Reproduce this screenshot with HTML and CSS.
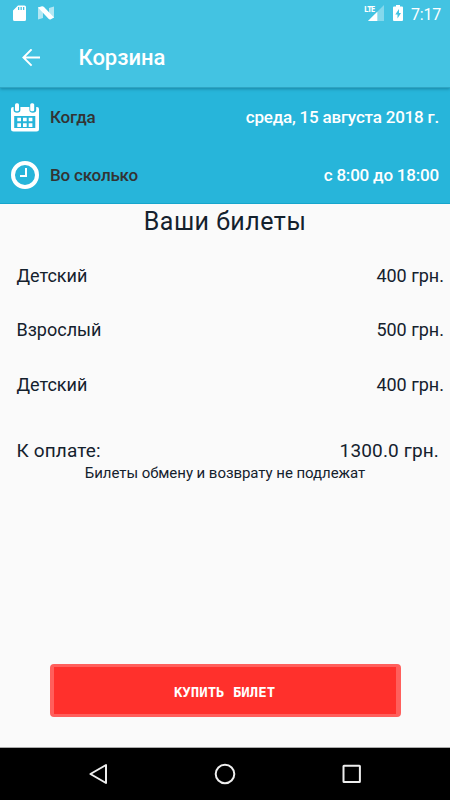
FILE: index.html
```html
<!DOCTYPE html>
<html lang="ru">
  <head>
    <meta charset="utf-8" />
    <title>Корзина</title>
    <link rel="stylesheet" href="styles.css">
  </head>

  <body>
    <header class="app-header">
      <div class="status-bar">
        <svg class="icon-sd" viewBox="0 0 14 17" width="14" height="17">
          <path fill="#fff" fill-rule="evenodd" d="M5 0.5H11.5Q13 .5 13 2V14.5Q13 16 11.5 16H1.5Q0 16 0 14.5V5.5ZM5 2V5H6.3V2ZM7.5 2V5H8.8V2ZM10 2V5H11.3V2Z" />
        </svg>
        <svg class="icon-n" viewBox="0 0 16 14" width="16" height="14">
          <path fill="#fff" opacity=".6" d="M0 1L5 3V12L0 13.5ZM11 2L16 .5V12L11 11Z" />
          <path fill="#fff" d="M0 1.5L4 .2Q5 0 6 1L16 11.5L12.5 13.4Q11.5 13.8 10.5 12.8Z" />
        </svg>
        <div class="status-right">
          <span class="lte">LTE</span>
          <svg class="icon-signal" viewBox="0 0 16 16" width="16" height="16">
            <path fill="#fff" opacity=".35" d="M16 0V16H0Z" />
            <path fill="#fff" d="M9.3 6.7V16H0Z" />
          </svg>
          <svg class="icon-battery" viewBox="0 0 10 16" width="10" height="16">
            <path fill="#fff" fill-rule="evenodd" d="M3 0H7V1.5H9Q10 1.5 10 2.5V15Q10 16 9 16H1Q0 16 0 15V2.5Q0 1.5 1 1.5H3ZM6 4L2.3 9.5H4.5V13.5L8 8H6Z" />
          </svg>
          <span class="clock">7:17</span>
        </div>
      </div>
      <div class="toolbar">
        <svg class="icon-back" viewBox="0 0 18 18" width="18" height="18" fill="none" stroke="#fff" stroke-width="1.9">
          <path d="M18 8.5H1.5M9.6 .3L1.4 8.5L9.6 16.7" />
        </svg>
        <h1 class="toolbar-title">Корзина</h1>
      </div>
    </header>

    <section class="visit">
      <div class="visit-row">
        <svg viewBox="0 0 28 29" width="28" height="29">
          <path fill="#fff" fill-rule="evenodd" d="M2 4H2.6V7Q2.6 9.7 6 9.7T9.4 7V4H18.4V7Q18.4 9.7 21.8 9.7T25.2 7V4H26Q28 4 28 6V26Q28 28.5 25.5 28.5H2.5Q0 28.5 0 26V6Q0 4 2 4ZM3.2 13V25H24.3V13Z" />
          <rect x="4" y=".3" width="4" height="8" rx="1.5" fill="#fff" />
          <rect x="19.2" y=".3" width="4" height="8" rx="1.5" fill="#fff" />
          <path fill="#fff" d="M6.3 14.7H10V18.3H6.3ZM12 14.7H15.7V18.3H12ZM17.7 14.7H21.4V18.3H17.7ZM6.3 20.3H10V23.9H6.3ZM12 20.3H15.7V23.9H12ZM17.7 20.3H21.4V23.9H17.7Z" />
        </svg>
        <span class="visit-label">Когда</span>
        <span class="visit-value">среда, 15 августа 2018 г.</span>
      </div>
      <div class="visit-row">
        <svg viewBox="0 0 28 28" width="28" height="28" fill="none" stroke="#fff">
          <circle cx="14" cy="14" r="12" stroke-width="4" />
          <path stroke-width="2" d="M15 7V15H9" />
        </svg>
        <span class="visit-label">Во сколько</span>
        <span class="visit-value">с 8:00 до 18:00</span>
      </div>
    </section>

    <main class="cart">
      <h2 class="cart-title">Ваши билеты</h2>
      <ul class="tickets">
        <li><span>Детский</span><span>400 грн.</span></li>
        <li><span>Взрослый</span><span>500 грн.</span></li>
        <li><span>Детский</span><span>400 грн.</span></li>
      </ul>
      <div class="total">
        <span>К оплате:</span>
        <span>1300.0 грн.</span>
      </div>
      <p class="note">Билеты обмену и возврату не подлежат</p>
      <button type="button" class="buy">КУПИТЬ БИЛЕТ</button>
    </main>

    <nav class="nav-bar">
      <svg viewBox="0 0 20 22" width="20" height="22" fill="none" stroke="#eee" stroke-width="2" stroke-linejoin="round">
        <path d="M18 2V20L2.4 11Z" />
      </svg>
      <svg viewBox="0 0 22 22" width="22" height="22" fill="none" stroke="#eee" stroke-width="2">
        <circle cx="11" cy="11" r="9.3" />
      </svg>
      <svg viewBox="0 0 20 20" width="20" height="20" fill="none" stroke="#eee" stroke-width="2">
        <rect x="1.5" y="1.7" width="16.4" height="16.4" rx=".5" />
      </svg>
    </nav>
  </body>
</html>
```

FILE: styles.css
```css
* {
  box-sizing: border-box;
}

body {
  display: flex;
  flex-direction: column;
  height: 800px;
  margin: 0;
  background-color: #fafafa;
  color: #14212d;
  font-family: Roboto, sans-serif;
}

.app-header {
  position: relative;
  height: 88px;
  background-color: #43c3e2;
  border-bottom: 1px solid #2fa5c3;
  box-shadow: 0 1px 3px rgba(0, 60, 80, 0.4);
  color: white;
}

.status-bar {
  display: flex;
  align-items: center;
  height: 28px;
  padding: 0 9px 0 13px;
}

.icon-sd {
  margin-top: -2px;
}

.icon-n {
  margin-left: 11px;
  margin-top: -2px;
}

.status-right {
  display: flex;
  align-items: center;
  margin-left: auto;
}

.lte {
  height: 18px;
  margin-right: -6px;
  font-family: "Open Sans", sans-serif;
  font-size: 8px;
  font-weight: bold;
  line-height: 8px;
  letter-spacing: -1.2px;
}

.icon-signal {
  margin-top: -2px;
}

.icon-battery {
  margin: -2px 8px 0 9px;
}

.clock {
  font-size: 16px;
  letter-spacing: -0.2px;
}

.toolbar {
  display: flex;
  align-items: center;
  height: 59px;
  padding-left: 22px;
}

.toolbar-title {
  margin: 0 0 0 38.5px;
  font-size: 22px;
  font-weight: 500;
}

.visit {
  height: 116px;
  background-color: #27b5da;
  border-bottom: 1px solid #16a5cc;
}

.visit-row {
  display: flex;
  align-items: center;
  height: 58px;
  padding: 0 11px;
  font-size: 17px;
  font-weight: 500;
  letter-spacing: -0.2px;
}

.visit-label {
  margin-left: 11px;
  color: #333;
}

.visit-value {
  margin-left: auto;
  color: white;
}

.cart {
  display: flex;
  flex: 1;
  flex-direction: column;
}

.cart-title {
  margin: 0;
  font-size: 25px;
  font-weight: normal;
  line-height: 36px;
  letter-spacing: 0.5px;
  text-align: center;
}

.tickets {
  margin: 8px 0 0;
  padding: 0;
  list-style: none;
}

.tickets li {
  display: flex;
  align-items: center;
  justify-content: space-between;
  height: 54.5px;
  padding: 0 6px 0 16.5px;
  font-size: 18px;
}

.total {
  display: flex;
  justify-content: space-between;
  margin-top: 28px;
  padding: 0 11px 0 16.5px;
  font-size: 19px;
  line-height: 22px;
  letter-spacing: 0.15px;
}

.note {
  margin: 1px 0 0;
  font-size: 15px;
  line-height: 20px;
  letter-spacing: -0.05px;
  text-align: center;
}

.buy {
  width: 351px;
  height: 53px;
  margin: auto auto 30px;
  padding: 0;
  border: solid #ff5f5c;
  border-width: 3px 5px 3px 4px;
  border-radius: 4px;
  background-color: #ff302c;
  color: white;
  font-family: "DejaVu Sans Mono", monospace;
  font-size: 14px;
  font-weight: bold;
  line-height: 20px;
  padding-top: 2px;
}

.nav-bar {
  display: flex;
  align-items: center;
  justify-content: space-between;
  height: 53px;
  padding: 0 88px;
  border-top: 1px solid #aaa;
  background-color: black;
}
```
